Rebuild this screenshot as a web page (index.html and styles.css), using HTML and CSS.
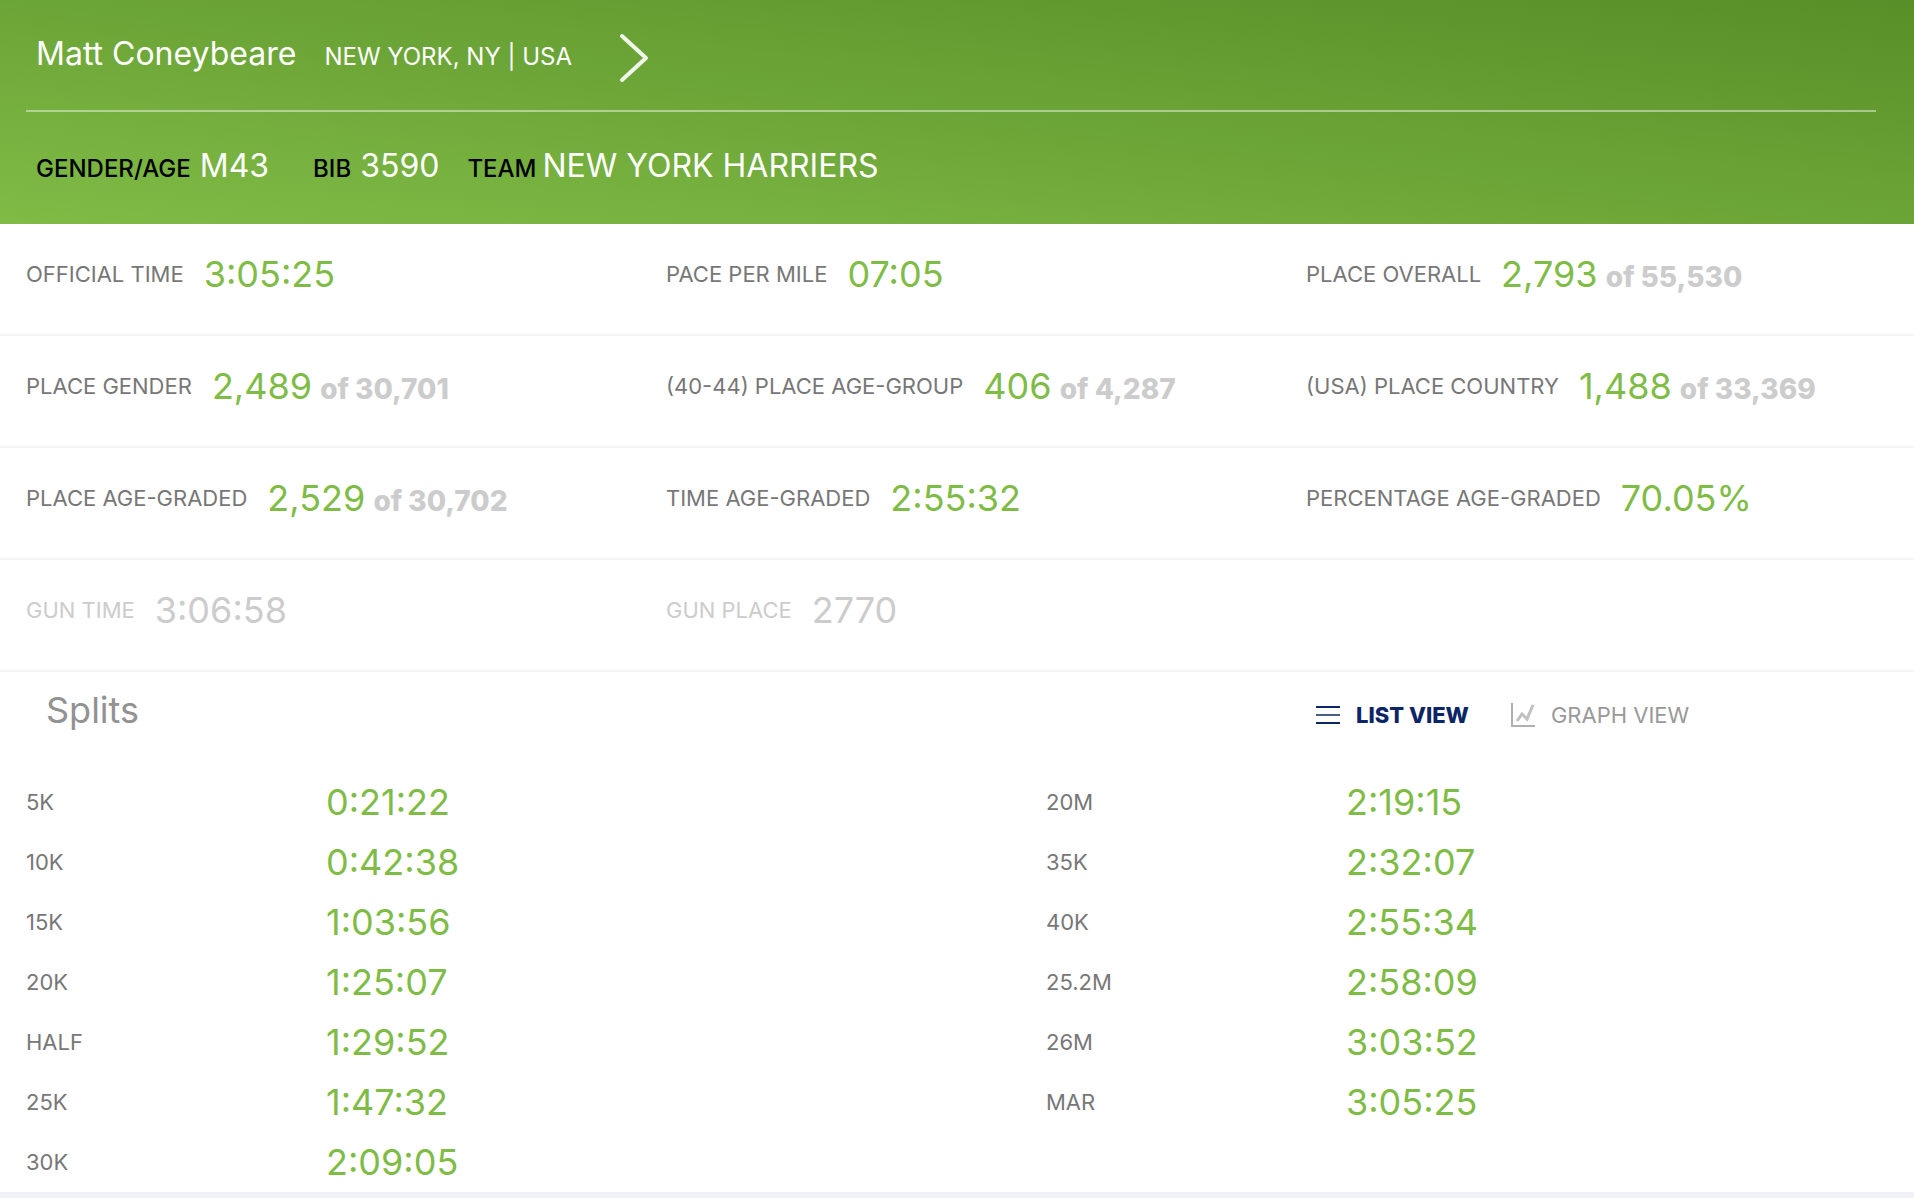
FILE: index.html
```html
<!DOCTYPE html>
<html lang="en">
<head>
<meta charset="utf-8">
<title>Matt Coneybeare - Race Results</title>
<link rel="stylesheet" href="styles.css">
</head>
<body>
<header class="runner">
  <div class="runner-top">
    <h1 class="runner-name">Matt Coneybeare</h1>
    <span class="runner-place">NEW YORK, NY | USA</span>
    <a class="runner-next" href="#next" aria-label="Next">
      <svg width="32" height="52" viewBox="0 0 32 52" fill="none" stroke="#fff" stroke-opacity=".9" stroke-width="4" stroke-linecap="round" stroke-linejoin="round"><path d="M4 4 28 26 4 48"/></svg>
    </a>
  </div>
  <dl class="runner-facts">
    <div class="fact fact-age"><dt>GENDER/AGE</dt><dd>M43</dd></div>
    <div class="fact"><dt>BIB</dt><dd>3590</dd></div>
    <div class="fact fact-team"><dt>TEAM</dt><dd>NEW YORK HARRIERS</dd></div>
  </dl>
</header>
<main>
  <dl class="stats">
    <div class="stats-row">
      <div class="stat"><dt>OFFICIAL TIME</dt><dd>3:05:25</dd></div>
      <div class="stat"><dt>PACE PER MILE</dt><dd>07:05</dd></div>
      <div class="stat"><dt>PLACE OVERALL</dt><dd>2,793 <span class="total">of 55,530</span></dd></div>
    </div>
    <div class="stats-row">
      <div class="stat"><dt>PLACE GENDER</dt><dd>2,489 <span class="total">of 30,701</span></dd></div>
      <div class="stat"><dt>(40-44) PLACE AGE-GROUP</dt><dd>406 <span class="total">of 4,287</span></dd></div>
      <div class="stat"><dt>(USA) PLACE COUNTRY</dt><dd>1,488 <span class="total">of 33,369</span></dd></div>
    </div>
    <div class="stats-row">
      <div class="stat"><dt>PLACE AGE-GRADED</dt><dd>2,529 <span class="total">of 30,702</span></dd></div>
      <div class="stat"><dt>TIME AGE-GRADED</dt><dd>2:55:32</dd></div>
      <div class="stat"><dt>PERCENTAGE AGE-GRADED</dt><dd>70.05%</dd></div>
    </div>
    <div class="stats-row muted">
      <div class="stat"><dt>GUN TIME</dt><dd>3:06:58</dd></div>
      <div class="stat"><dt>GUN PLACE</dt><dd>2770</dd></div>
    </div>
  </dl>
  <section class="splits">
    <div class="splits-head">
      <h2 class="splits-title">Splits</h2>
      <div class="views">
        <button class="view active" type="button">
          <svg width="24" height="24" viewBox="0 0 24 24" fill="none" stroke="currentColor" stroke-width="2"><path d="M0 4h24M0 20h24"/><path d="M0 12h24" opacity=".75"/></svg>
          LIST VIEW
        </button>
        <button class="view" type="button">
          <svg width="24" height="24" viewBox="0 0 24 24" fill="none" stroke="#b0b0b0" stroke-width="2"><path d="M1 0v23h23"/><path d="M6 18l5-7 5 5 6-14" stroke-width="3" stroke="#c0c0c0"/></svg>
          GRAPH VIEW
        </button>
      </div>
    </div>
    <div class="splits-grid">
      <table class="split-table">
        <tr><th scope="row">5K</th><td>0:21:22</td></tr>
        <tr><th scope="row">10K</th><td>0:42:38</td></tr>
        <tr><th scope="row">15K</th><td>1:03:56</td></tr>
        <tr><th scope="row">20K</th><td>1:25:07</td></tr>
        <tr><th scope="row">HALF</th><td>1:29:52</td></tr>
        <tr><th scope="row">25K</th><td>1:47:32</td></tr>
        <tr><th scope="row">30K</th><td>2:09:05</td></tr>
      </table>
      <table class="split-table">
        <tr><th scope="row">20M</th><td>2:19:15</td></tr>
        <tr><th scope="row">35K</th><td>2:32:07</td></tr>
        <tr><th scope="row">40K</th><td>2:55:34</td></tr>
        <tr><th scope="row">25.2M</th><td>2:58:09</td></tr>
        <tr><th scope="row">26M</th><td>3:03:52</td></tr>
        <tr><th scope="row">MAR</th><td>3:05:25</td></tr>
      </table>
    </div>
  </section>
</main>
</body>
</html>
```
FILE: styles.css
```css
* {
  box-sizing: border-box;
}

body {
  margin: 0;
  background: #f0f2f7;
  color: #777;
  font-family: Inter, "Liberation Sans", sans-serif;
  font-size: 22px;
}

h1, h2, dl, dd {
  margin: 0;
  font-weight: 400;
}

main {
  background: #fff;
}

.runner {
  padding: 0 38px 0 26px;
  background: linear-gradient(to top right, #80bb46, #588f28);
  color: #fff;
}

.runner-top {
  display: flex;
  align-items: baseline;
  height: 112px;
  padding: 32px 10px 0;
  border-bottom: 2px solid rgba(255, 255, 255, 0.45);
}

.runner-name {
  font-size: 32px;
  line-height: 44px;
}

.runner-place {
  margin-left: 28px;
  font-size: 24px;
}

.runner-next {
  align-self: flex-start;
  height: 52px;
  margin-left: 46px;
}

.runner-next svg {
  display: block;
}

.runner-facts {
  display: flex;
  align-items: baseline;
  gap: 28px;
  height: 112px;
  padding: 32px 10px 0;
}

.fact {
  display: flex;
  align-items: baseline;
  gap: 9px;
}

.fact-age {
  margin-right: 16px;
}

.fact-team {
  gap: 6px;
}

.fact dt {
  color: #000;
  font-size: 24px;
  font-weight: 500;
}

.fact dd {
  font-size: 32px;
  line-height: 44px;
}

.stats-row {
  display: grid;
  grid-template-columns: repeat(3, 1fr);
  gap: 32px;
  padding: 28px 0 38px 26px;
  border-bottom: 2px solid #f4f4f4;
}

.stat {
  display: flex;
  align-items: center;
  gap: 20px;
  white-space: nowrap;
}

.stat dd,
.split-table td {
  color: #7fbc46;
  font-size: 36px;
  line-height: 44px;
}

.stat .total {
  margin-left: -2px;
  color: #ccc;
  font-size: 28px;
  font-weight: 800;
  line-height: 28px;
}

.muted dt,
.muted dd {
  color: #ccc;
}

.splits-head {
  display: grid;
  grid-template-columns: repeat(3, 1fr);
  gap: 32px;
  height: 100px;
  padding: 16px 0 0 26px;
}

.splits-title {
  grid-column: span 2;
  padding-left: 20px;
  color: #929292;
  font-size: 36px;
  line-height: 44px;
}

.views {
  display: flex;
  align-items: flex-start;
  gap: 42px;
  padding: 11px 0 0 10px;
}

.view {
  display: flex;
  align-items: center;
  gap: 16px;
  padding: 0;
  border: 0;
  background: none;
  color: #999;
  font: 400 22px/32px Inter, "Liberation Sans", sans-serif;
  white-space: nowrap;
}

.view.active {
  color: #0b2566;
  font-weight: 800;
}

.splits-grid {
  display: grid;
  grid-template-columns: repeat(2, 1fr);
  align-items: start;
  gap: 152px;
  padding-left: 26px;
}

.split-table {
  width: 100%;
  border-collapse: collapse;
  table-layout: fixed;
}

.split-table th {
  width: 300px;
  padding: 0;
  font-weight: 400;
  text-align: left;
}

.split-table td {
  padding: 8px 0;
}
```
